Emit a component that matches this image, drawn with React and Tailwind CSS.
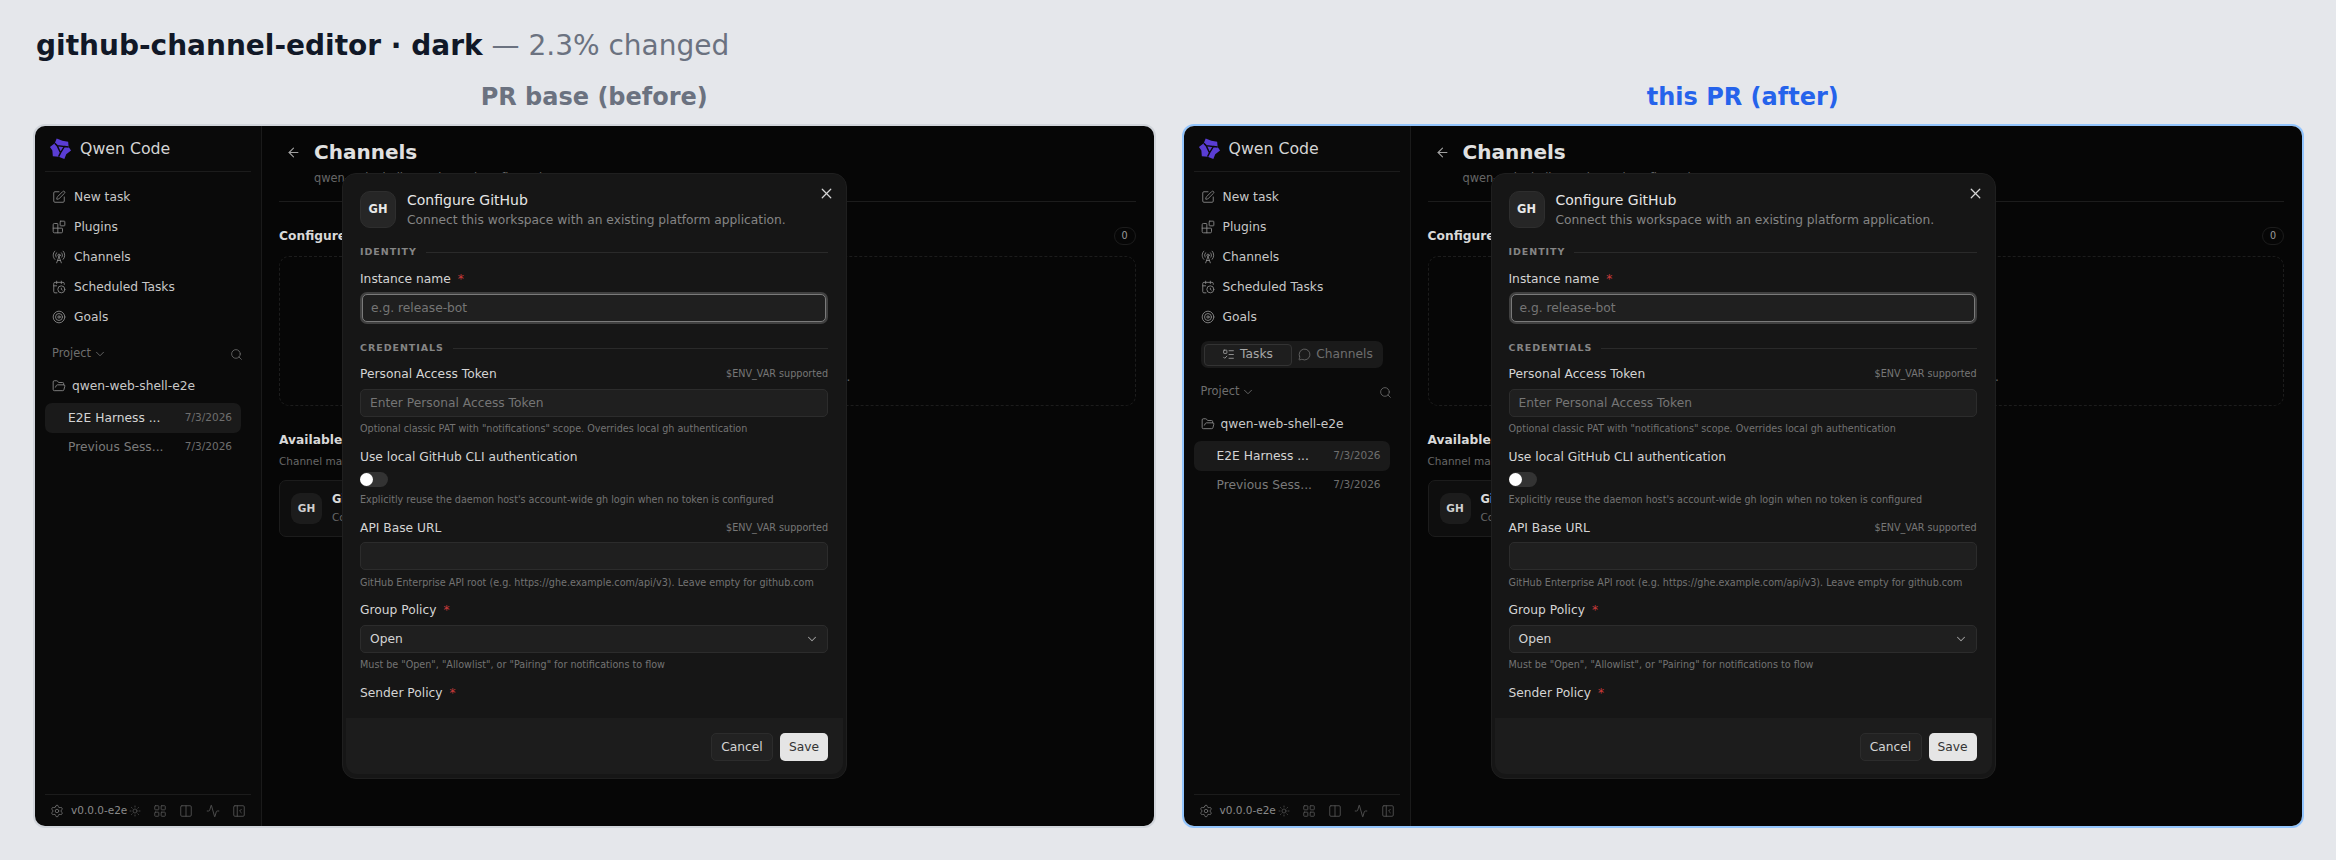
import {
  Activity,
  ArrowLeft,
  Blocks,
  CalendarClock,
  ChevronDown,
  Columns2,
  FolderOpen,
  LayoutGrid,
  ListTodo,
  MessageCircle,
  PanelLeftClose,
  RadioTower,
  Search,
  Settings,
  SquarePen,
  Sun,
  Target,
  X,
} from "lucide-react";

function QwenLogo() {
  return (
    <svg viewBox="0 0 24 24" className="w-[23px] h-[23px] shrink-0">
      <path
        fill="#5a3dd4"
        d="M8 1.500L14 4l6 1 .5 5.500L23 14l-5 4-2 5-6-2.500L4 20l-.5-6L1 10.500l5-4z"
      />
      <path
        fill="none"
        stroke="#0a0a0a"
        strokeWidth="1.500"
        d="M8.500 9L16 10l-4 6.500zM8.500 9L6 6.500M16 10l4.500.5M12 16.500l-2 4"
      />
    </svg>
  );
}

function NavItem({ icon: Icon, label }) {
  return (
    <div className="flex items-center h-[30px] pl-[7px] gap-[8px] text-[12.25px] text-[#c8c8c8]">
      <Icon className="w-[14px] h-[14px] text-[#8a8a8a]" strokeWidth={1.5} />
      <span>{label}</span>
    </div>
  );
}

function SessionRow({ title, active }) {
  return (
    <div
      className={`flex items-center justify-between h-[29.5px] pl-[23px] pr-[9px] rounded-[7px] ${
        active ? "bg-[#1a1a1a] text-[#d4d4d4]" : "text-[#7a7a7a]"
      }`}
    >
      <span className="text-[12.25px]">{title}</span>
      <span className="text-[10.5px] text-[#6e6e6e]">7/3/2026</span>
    </div>
  );
}

function Sidebar({ withTabs }) {
  return (
    <aside className="flex flex-col w-[227px] shrink-0 border-r border-[#1a1a1a] bg-[#0a0a0a]">
      <div className="flex items-center gap-[8px] h-[46px] mx-[10px] pl-[4px] border-b border-[#1c1c1c]">
        <QwenLogo />
        <span className="text-[15.75px] text-[#d4d4d4]">Qwen Code</span>
      </div>
      <nav className="mt-[10px] mx-[10px]">
        <NavItem icon={SquarePen} label="New task" />
        <NavItem icon={Blocks} label="Plugins" />
        <NavItem icon={RadioTower} label="Channels" />
        <NavItem icon={CalendarClock} label="Scheduled Tasks" />
        <NavItem icon={Target} label="Goals" />
      </nav>
      {withTabs && (
        <div className="flex items-center h-[27px] mt-[9px] ml-[17px] w-[182px] p-[3px] rounded-[7px] bg-[#1a1a1a] text-[12.25px]">
          <div className="flex items-center justify-center gap-[5px] w-[88px] h-[22px] rounded-[4px] border border-[#333333] bg-[#1e1e1e] text-[#a8a8a8]">
            <ListTodo className="w-[13px] h-[13px]" strokeWidth={1.5} />
            Tasks
          </div>
          <div className="flex items-center justify-center gap-[5px] flex-1 text-[#6e6e6e]">
            <MessageCircle className="w-[13px] h-[13px]" strokeWidth={1.5} />
            Channels
          </div>
        </div>
      )}
      <div
        className={`flex items-center justify-between h-[20px] ml-[17px] mr-[18px] text-[11.4px] text-[#6e6e6e] ${
          withTabs ? "mt-[14px]" : "mt-[12px]"
        }`}
      >
        <span className="flex items-center gap-[2px]">
          Project
          <ChevronDown className="w-[14px] h-[14px]" strokeWidth={1.5} />
        </span>
        <Search className="w-[13px] h-[13px]" strokeWidth={1.5} />
      </div>
      <div className="flex items-center gap-[6px] h-[24px] mt-[10px] ml-[17px] text-[12.25px] text-[#c8c8c8]">
        <FolderOpen className="w-[14px] h-[14px] text-[#8a8a8a]" strokeWidth={1.5} />
        qwen-web-shell-e2e
      </div>
      <div className="mt-[5px] ml-[10px] w-[196px]">
        <SessionRow title="E2E Harness ..." active />
        <SessionRow title="Previous Sess..." />
      </div>
      <div className="mt-auto mx-[10px] h-[32px] border-t border-[#1c1c1c] flex items-center text-[#6e6e6e]">
        <Settings className="ml-[5px] w-[14px] h-[14px]" strokeWidth={1.5} />
        <span className="ml-[7px] w-[58px] whitespace-nowrap text-[10.5px] text-[#8a8a8a]">v0.0.0-e2e</span>
        <Sun className="w-[12px] h-[12px] text-[#555555]" strokeWidth={1.5} />
        <LayoutGrid className="ml-[12px] w-[14px] h-[14px] text-[#555555]" strokeWidth={1.5} />
        <Columns2 className="ml-[12px] w-[14px] h-[14px] text-[#555555]" strokeWidth={1.5} />
        <Activity className="ml-[12.5px] w-[14px] h-[14px] text-[#555555]" strokeWidth={1.5} />
        <PanelLeftClose className="ml-[12.5px] w-[14px] h-[14px] text-[#555555]" strokeWidth={1.5} />
      </div>
    </aside>
  );
}

function Main() {
  return (
    <main className="flex-1 min-w-0 bg-[#060606] pl-[17px] pr-[18px]">
      <div className="h-[76px] border-b border-[#1c1c1c] pt-[12px]">
        <div className="flex items-center gap-[13px] h-[28px]">
          <ArrowLeft className="ml-[7px] w-[15px] h-[15px] text-[#a0a0a0]" strokeWidth={1.75} />
          <h1 className="text-[20px] font-bold text-[#e0e0e0]">Channels</h1>
        </div>
        <p className="ml-[35px] mt-[4px] text-[11.4px] text-[#666666]">
          qwen-web-shell-e2e channel configuration
        </p>
      </div>
      <div className="flex items-center justify-between h-[18px] mt-[25px] text-[12.25px] font-bold text-[#d8d8d8]">
        Configured Channels
        <span className="flex items-center justify-center w-[22px] h-[18px] rounded-full border border-[#1c1c1c] text-[9.6px] font-normal text-[#9a9a9a]">
          0
        </span>
      </div>
      <div className="flex flex-col items-center justify-center gap-[8px] h-[150px] mt-[11px] pt-[69px] rounded-[10px] border border-dashed border-[#1c1c1c] text-[12.25px] leading-[15px] text-[#666666]">
        <p>No channels have been set up for this server</p>
        <p>Add one from the available list below to begin.</p>
      </div>
      <h2 className="mt-[25px] text-[12.25px] font-bold text-[#d8d8d8]">Available Channels</h2>
      <p className="mt-[5px] text-[10.5px] text-[#666666]">Channel management for this workspace</p>
      <div className="flex items-center gap-[10px] w-[400px] h-[57px] mt-[10px] pl-[11px] rounded-[7px] border border-[#1c1c1c] bg-[#0e0e0e]">
        <div className="flex items-center justify-center w-[31px] h-[31px] rounded-[9px] bg-[#1c1c1c] text-[10.5px] font-bold text-[#d0d0d0]">
          GH
        </div>
        <div>
          <p className="text-[11.4px] font-bold text-[#d8d8d8]">GitHub</p>
          <p className="mt-[2px] text-[10.5px] text-[#666666]">Connect a workspace</p>
        </div>
      </div>
    </main>
  );
}

function SectionHead({ label, className }) {
  return (
    <div className={`flex items-center gap-[9px] h-[14px] ${className}`}>
      <span className="text-[9.5px] font-bold tracking-[0.1em] text-[#858585]">{label}</span>
      <span className="flex-1 border-t border-[#2a2a2a]" />
    </div>
  );
}

function FieldLabel({ children, required, env, className }) {
  return (
    <div className={`flex items-center justify-between h-[16px] text-[12.25px] text-[#d4d4d4] ${className}`}>
      <span>
        {children}
        {required && <span className="ml-[7px] text-[#c93a3a]">*</span>}
      </span>
      {env && <span className="text-[9.625px] text-[#777777]">$ENV_VAR supported</span>}
    </div>
  );
}

function TextInput({ placeholder, className }) {
  return (
    <div
      className={`flex items-center h-[28px] px-[9px] rounded-[5px] border border-[#2c2c2c] bg-[#1f1f1f] text-[12.25px] text-[#757575] ${className}`}
    >
      {placeholder}
    </div>
  );
}

function Help({ children, className }) {
  return <p className={`h-[12px] leading-[12px] text-[9.625px] text-[#737373] ${className}`}>{children}</p>;
}

function ConfigureModal() {
  return (
    <div className="absolute left-[307px] top-[47px] flex flex-col w-[505px] h-[606px] rounded-[14px] border border-[#1f1f1f] bg-[#161616] overflow-hidden">
      <div className="flex-1 min-h-0 overflow-hidden pl-[17px] pr-[18px] pt-[17px]">
        <div className="relative flex items-center gap-[11px]">
          <div className="flex items-center justify-center w-[36px] h-[37px] rounded-[10px] border border-[#2e2e2e] bg-[#262626] text-[11.4px] font-bold text-[#e8e8e8]">
            GH
          </div>
          <div>
            <h3 className="text-[14px] leading-[16px] text-[#e5e5e5]">Configure GitHub</h3>
            <p className="mt-[4px] text-[12.25px] leading-[16px] text-[#858585]">
              Connect this workspace with an existing platform application.
            </p>
          </div>
          <X className="absolute right-[-7px] top-[-6.5px] w-[17px] h-[17px] text-[#d4d4d4]" strokeWidth={1.75} />
        </div>
        <SectionHead label="IDENTITY" className="mt-[17px]" />
        <FieldLabel required className="mt-[12px]">Instance name</FieldLabel>
        <div className="mt-[5px] p-[2px] rounded-[7px] bg-[#404040]">
          <div className="flex items-center h-[28px] px-[8px] rounded-[5px] border border-[#7a7a7a] bg-[#1f1f1f] text-[12.25px] text-[#757575]">
            e.g. release-bot
          </div>
        </div>
        <SectionHead label="CREDENTIALS" className="mt-[17px]" />
        <FieldLabel env className="mt-[11px]">Personal Access Token</FieldLabel>
        <TextInput placeholder="Enter Personal Access Token" className="mt-[7px]" />
        <Help className="mt-[6px]">Optional classic PAT with "notifications" scope. Overrides local gh authentication</Help>
        <FieldLabel className="mt-[14px]">Use local GitHub CLI authentication</FieldLabel>
        <div className="flex items-center w-[28px] h-[15px] mt-[7px] rounded-full bg-[#333333]">
          <span className="w-[13px] h-[13px] rounded-full bg-white" />
        </div>
        <Help className="mt-[7px]">Explicitly reuse the daemon host's account-wide gh login when no token is configured</Help>
        <FieldLabel env className="mt-[14px]">API Base URL</FieldLabel>
        <TextInput className="mt-[6px]" />
        <Help className="mt-[7px]">GitHub Enterprise API root (e.g. https://ghe.example.com/api/v3). Leave empty for github.com</Help>
        <FieldLabel required className="mt-[13px]">Group Policy</FieldLabel>
        <div className="flex items-center justify-between h-[28px] mt-[7px] pl-[9px] pr-[8px] rounded-[5px] border border-[#2c2c2c] bg-[#1f1f1f] text-[12.25px] text-[#d4d4d4]">
          Open
          <ChevronDown className="w-[14px] h-[14px] text-[#a0a0a0]" strokeWidth={1.75} />
        </div>
        <Help className="mt-[6px]">Must be "Open", "Allowlist", or "Pairing" for notifications to flow</Help>
        <FieldLabel required className="mt-[14px]">Sender Policy</FieldLabel>
      </div>
      <div className="flex items-center justify-end gap-[7px] h-[56px] mx-[3px] mb-[4px] pt-[2px] pr-[15px] rounded-b-[11px] bg-[#1c1c1c]">
        <button className="w-[62px] h-[28px] rounded-[5px] border border-[#2c2c2c] bg-[#222222] text-[12.25px] text-[#d4d4d4]">
          Cancel
        </button>
        <button className="w-[48px] h-[28px] rounded-[5px] bg-[#e5e5e5] text-[12.25px] text-[#333333]">
          Save
        </button>
      </div>
    </div>
  );
}

function Pane({ title, titleColor, border, withTabs }) {
  return (
    <section>
      <h2 className={`h-[34px] text-center text-[24px] leading-[34px] font-bold ${titleColor}`}>{title}</h2>
      <div className={`relative flex h-[704px] mt-[10px] rounded-[12px] border-2 overflow-hidden ${border}`}>
        <Sidebar withTabs={withTabs} />
        <Main />
        <ConfigureModal />
      </div>
    </section>
  );
}

export default function App() {
  return (
    <div className="h-[860px] overflow-hidden bg-[#e5e7eb] pl-[33px] pr-[32px] pt-[24px] font-['DejaVu_Sans',sans-serif]">
      <div className="h-[44px] pl-[3px] text-[28px] leading-[44px] text-[#111827]">
        <b>github-channel-editor · dark</b>
        <span className="text-[#6b7280]"> — 2.3% changed</span>
      </div>
      <div className="grid grid-cols-2 gap-[26px] mt-[12px]">
        <Pane title="PR base (before)" titleColor="text-[#6b7280]" border="border-[#d1d5db]" />
        <Pane title="this PR (after)" titleColor="text-[#2563eb]" border="border-[#93c5fd]" withTabs />
      </div>
    </div>
  );
}
